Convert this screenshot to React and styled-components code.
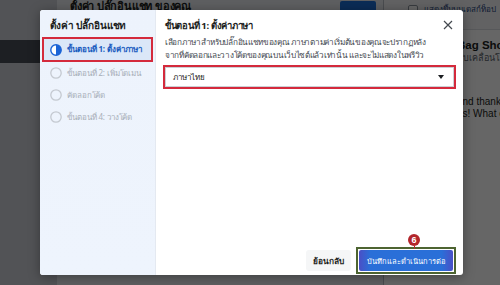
import React from 'react'
import styled, { createGlobalStyle } from 'styled-components'

const GlobalStyle = createGlobalStyle`
  html, body {
    margin: 0;
    padding: 0;
    width: 500px;
    height: 285px;
    overflow: hidden;
    font-family: "Noto Sans", "DejaVu Sans", "Liberation Sans", sans-serif;
  }
  * { box-sizing: border-box; }
`

const steps = [
  { label: 'ขั้นตอนที่ 1: ตั้งค่าภาษา', active: true },
  { label: 'ขั้นตอนที่ 2: เพิ่มโดเมน' },
  { label: 'คัดลอกโค้ด' },
  { label: 'ขั้นตอนที่ 4: วางโค้ด' },
]

function StepIcon({ active }) {
  if (active) {
    return (
      <svg width="12" height="12" viewBox="0 0 12 12">
        <circle cx="6" cy="6" r="5.2" fill="#fff" stroke="#1b63d6" strokeWidth="1.4" />
        <path d="M6 0.8 A5.2 5.2 0 0 1 6 11.2 Z" fill="#1b63d6" />
      </svg>
    )
  }
  return (
    <svg width="12" height="12" viewBox="0 0 12 12">
      <circle cx="6" cy="6" r="5.2" fill="none" stroke="#c4c9d0" strokeWidth="1.3" />
    </svg>
  )
}

function App() {
  return (
    <>
      <GlobalStyle />
      <Page>
        <Backdrop>
          <LeftNav>
            <NavActive />
          </LeftNav>
          <Main>
            <MainHeader>
              <MainTitle>ตั้งค่า ปลั๊กอินแชท ของคุณ</MainTitle>
              <MainButton />
            </MainHeader>
          </Main>
          <Divider />
          <PreviewPanel>
            <PreviewHeader>
              <Check />
              <PreviewToggle>แสดงขึ้นบนเดสก์ท็อป</PreviewToggle>
            </PreviewHeader>
            <Profile>
              <ShopName>Bag Shop</ShopName>
              <ShopSub>ขับเคลื่อนโดย Messenger</ShopSub>
            </Profile>
            <Bubble>
              and thanks for<br />
              us! What can we do?
            </Bubble>
          </PreviewPanel>
        </Backdrop>
        <Overlay />

        <Modal>
          <Sidebar>
            <SideTitle>ตั้งค่า ปลั๊กอินแชท</SideTitle>
            <StepList>
              {steps.map((s) => (
                <Step key={s.label} $active={s.active}>
                  <StepIcon active={s.active} />
                  <StepLabel $active={s.active}>{s.label}</StepLabel>
                </Step>
              ))}
            </StepList>
          </Sidebar>

          <Content>
            <Header>
              <Title>ขั้นตอนที่ 1: ตั้งค่าภาษา</Title>
              <Close aria-label="close">
                <svg width="10" height="10" viewBox="0 0 10 10">
                  <path d="M1 1 L9 9 M9 1 L1 9" stroke="#444950" strokeWidth="1.2" />
                </svg>
              </Close>
            </Header>
            <Description>
              เลือกภาษาสำหรับปลั๊กอินแชทของคุณ ภาษาตามค่าเริ่มต้นของคุณจะปรากฏหลัง<br />
              จากที่คัดลอกและวางโค้ดของคุณบนเว็บไซต์แล้วเท่านั้น และจะไม่แสดงในพรีวิว
            </Description>
            <SelectFrame>
              <Select>
                <span>ภาษาไทย</span>
                <Caret />
              </Select>
            </SelectFrame>

            <Footer>
              <SecondaryButton>ย้อนกลับ</SecondaryButton>
              <PrimaryWrap>
                <Badge>6</Badge>
                <PrimaryButton>บันทึกและดำเนินการต่อ</PrimaryButton>
              </PrimaryWrap>
            </Footer>
          </Content>
        </Modal>
      </Page>
    </>
  )
}

const Page = styled.div`
  position: relative;
  width: 500px;
  height: 285px;
  overflow: hidden;
`

const Backdrop = styled.div`
  display: grid;
  grid-template-columns: 57px 326px 1px 116px;
  height: 100%;
  background: #e6e9ee;
`

const LeftNav = styled.div`
  background: #ccd0d7;
  padding-top: 40px;
`

const NavActive = styled.div`
  height: 23px;
  background: #4a4f57;
`

const Main = styled.div`
  background: #eceef2;
`

const MainHeader = styled.div`
  display: flex;
  align-items: flex-start;
  justify-content: space-between;
  padding: 0 7px 0 13px;
  height: 20px;
`

const MainTitle = styled.div`
  font-size: 11px;
  font-weight: 700;
  color: #1c1e21;
  line-height: 14px;
  margin-top: -1px;
  letter-spacing: -0.2px;
`

const MainButton = styled.div`
  width: 36px;
  height: 12px;
  margin-top: 1px;
  border-radius: 2px;
  background: #1d6fd8;
`

const Divider = styled.div`
  background: #b9bec6;
`

const PreviewPanel = styled.div`
  background: #ffffff;
  display: flex;
  flex-direction: column;
`

const PreviewHeader = styled.div`
  display: flex;
  align-items: center;
  gap: 6px;
  height: 30px;
  padding: 0 0 10px 24px;
  border-bottom: 1px solid #dadde1;
  background: #f5f6f7;
`

const Check = styled.div`
  width: 10px;
  height: 10px;
  border: 1px solid #8d949e;
  border-radius: 2px;
  background: #fff;
  flex: none;
`

const PreviewToggle = styled.div`
  font-size: 8px;
  color: #27457e;
  white-space: nowrap;
`

const Profile = styled.div`
  display: flex;
  flex-direction: column;
  padding: 8px 0 0 73px;
`

const ShopName = styled.div`
  font-family: "Liberation Sans", sans-serif;
  font-size: 11.5px;
  font-weight: 700;
  color: #1c1e21;
  line-height: 14px;
  white-space: nowrap;
`

const ShopSub = styled.div`
  font-size: 9px;
  color: #606770;
  white-space: nowrap;
  line-height: 12px;
`

const Bubble = styled.div`
  margin: 32px 0 0 73px;
  font-family: "Liberation Sans", sans-serif;
  font-size: 10px;
  line-height: 12px;
  color: #1c1e21;
  white-space: nowrap;
`

const Overlay = styled.div`
  position: absolute;
  inset: 0;
  background: rgba(0, 0, 0, 0.6);
`

const Modal = styled.div`
  position: absolute;
  left: 40px;
  top: 10px;
  width: 423px;
  height: 265px;
  display: flex;
  background: #fff;
  border-radius: 3px;
  box-shadow: 0 2px 12px rgba(0, 0, 0, 0.35);
`

const Sidebar = styled.div`
  width: 116px;
  flex: none;
  padding: 8px 2px 0;
  background: linear-gradient(180deg, #edf3fc 0%, #eef4fd 100%);
  border-right: 1px solid #e4e9f1;
  border-radius: 3px 0 0 3px;
`

const SideTitle = styled.div`
  font-size: 10px;
  font-weight: 700;
  color: #1c1e21;
  line-height: 14px;
  padding-left: 8px;
  margin-bottom: 5px;
  letter-spacing: -0.1px;
  white-space: nowrap;
`

const StepList = styled.div`
  display: flex;
  flex-direction: column;
`

const Step = styled.div`
  display: flex;
  align-items: center;
  gap: 5px;
  height: ${(p) => (p.$active ? '25px' : '22px')};
  padding-left: 6px;
  border: 2px solid ${(p) => (p.$active ? '#d42a3c' : 'transparent')};
  background: ${(p) => (p.$active ? '#dbe7f8' : 'transparent')};
  svg { flex: none; }
`

const StepLabel = styled.span`
  font-size: 8px;
  font-weight: ${(p) => (p.$active ? 700 : 400)};
  color: ${(p) => (p.$active ? '#1a5cc0' : '#a7aeb8')};
  letter-spacing: -0.1px;
  white-space: nowrap;
`

const Content = styled.div`
  flex: 1;
  display: flex;
  flex-direction: column;
  padding: 8px 7px 1px;
  min-width: 0;
`

const Header = styled.div`
  display: flex;
  align-items: center;
  justify-content: space-between;
  padding: 0 2px 0 2px;
  height: 14px;
`

const Title = styled.div`
  font-size: 9.5px;
  font-weight: 700;
  color: #1c1e21;
  letter-spacing: -0.3px;
  white-space: nowrap;
`

const Close = styled.button`
  border: none;
  background: none;
  padding: 0;
  width: 12px;
  height: 12px;
  display: flex;
  align-items: center;
  justify-content: center;
`

const Description = styled.div`
  margin-top: 3px;
  padding-left: 2px;
  font-size: 8.2px;
  line-height: 13px;
  letter-spacing: -0.3px;
  color: #444950;
  white-space: nowrap;
`

const SelectFrame = styled.div`
  margin-top: 4px;
  border: 2px solid #d42a3c;
  height: 24px;
`

const Select = styled.div`
  height: 100%;
  display: flex;
  align-items: center;
  justify-content: space-between;
  padding: 0 9px 0 7px;
  border: 1px solid #ccd0d5;
  background: #fff;
  font-size: 8px;
  color: #1c1e21;
`

const Caret = styled.span`
  width: 0;
  height: 0;
  border-left: 3.5px solid transparent;
  border-right: 3.5px solid transparent;
  border-top: 4px solid #1c1e21;
`

const Footer = styled.div`
  margin-top: auto;
  display: flex;
  align-items: flex-end;
  justify-content: flex-end;
  gap: 5px;
`

const SecondaryButton = styled.button`
  height: 21px;
  width: 45px;
  margin-bottom: 3px;
  padding: 0;
  border: none;
  border-radius: 3px;
  background: #f5f6f7;
  font-family: inherit;
  font-size: 8.3px;
  font-weight: 700;
  color: #1c1e21;
`

const PrimaryWrap = styled.div`
  position: relative;
  border: 2px solid #4d6431;
  padding: 1px;
  background: #fff;
`

const Badge = styled.span`
  position: absolute;
  left: 50px;
  top: -15px;
  width: 12px;
  height: 12px;
  border-radius: 50%;
  background: #b3262b;
  color: #fff;
  font-family: "Liberation Sans", sans-serif;
  font-size: 9px;
  font-weight: 700;
  line-height: 12px;
  text-align: center;
  &::after {
    content: '';
    position: absolute;
    left: 5.5px;
    top: 12px;
    width: 1px;
    height: 3px;
    background: #b3262b;
  }
`

const PrimaryButton = styled.button`
  display: block;
  height: 21px;
  width: 94px;
  border: none;
  border-radius: 2px;
  padding: 0;
  background: linear-gradient(90deg, #4a4fc6 0%, #2a6fd8 12%, #2a6fd8 88%, #4a4fc6 100%);
  font-family: inherit;
  font-size: 7.5px;
  color: #fff;
  white-space: nowrap;
`

export default App
